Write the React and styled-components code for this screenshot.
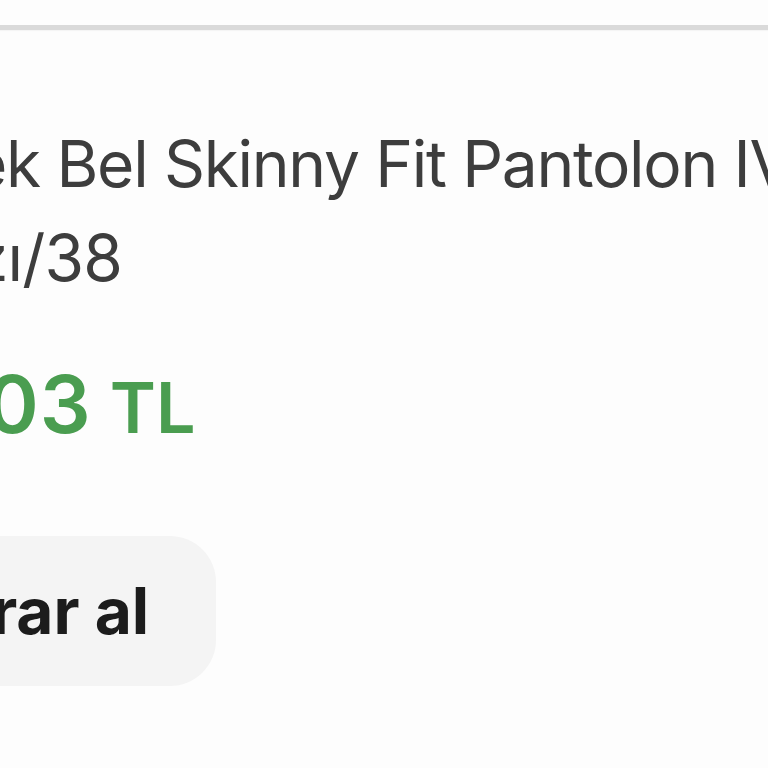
import React from "react"
import styled, { createGlobalStyle } from "styled-components"

const Global = createGlobalStyle`
  html, body {
    margin: 0;
    padding: 0;
    background: #fdfdfd;
    overflow: hidden;
  }
  body {
    font-family: Inter, "Noto Sans", "Liberation Sans", sans-serif;
  }
`

const Page = styled.div`
  width: 768px;
  height: 768px;
  overflow: hidden;
  padding-top: 25px;
  box-sizing: border-box;
`

const Divider = styled.div`
  height: 5px;
  background: #dadada;
  box-shadow: 0 1px 1px rgba(0, 0, 0, 0.03);
`

const Card = styled.div`
  display: flex;
  flex-direction: column;
  align-items: flex-start;
  padding-top: 87px;
`

const Line = styled.div`
  margin-left: ${(p) => p.$shift}px;
  white-space: nowrap;
  font-size: 64px;
  line-height: 94px;
  color: #3d3d3d;
  letter-spacing: ${(p) => p.$track ?? -0.8}px;
`

const Price = styled.div`
  margin-left: ${(p) => p.$shift}px;
  margin-top: 49px;
  white-space: nowrap;
  font-size: 80px;
  line-height: 100px;
  font-weight: 600;
  color: #4a9d50;
  letter-spacing: 1px;

  span {
    font-size: 70px;
    font-weight: 600;
    margin-left: 18px;
    letter-spacing: 0;
  }
`

const Button = styled.button`
  margin-left: ${(p) => p.$shift}px;
  margin-top: 78px;
  border: none;
  background: #f4f4f4;
  border-radius: 46px;
  padding: 38px 67px 38px 0;
  font-family: inherit;
  font-size: 64px;
  line-height: 74px;
  font-weight: 700;
  color: #1c1c1c;
  white-space: nowrap;
`

export default function App() {
  return (
    <Page>
      <Global />
      <Divider />
      <Card>
        <Line $shift={-30} $track={-1.3}>
          ek Bel Skinny Fit Pantolon IVORY
        </Line>
        <Line $shift={-27}>zı/38</Line>
        <Price $shift={-14}>
          03<span>TL</span>
        </Price>
        <Button $shift={-46}>krar al</Button>
      </Card>
    </Page>
  )
}
